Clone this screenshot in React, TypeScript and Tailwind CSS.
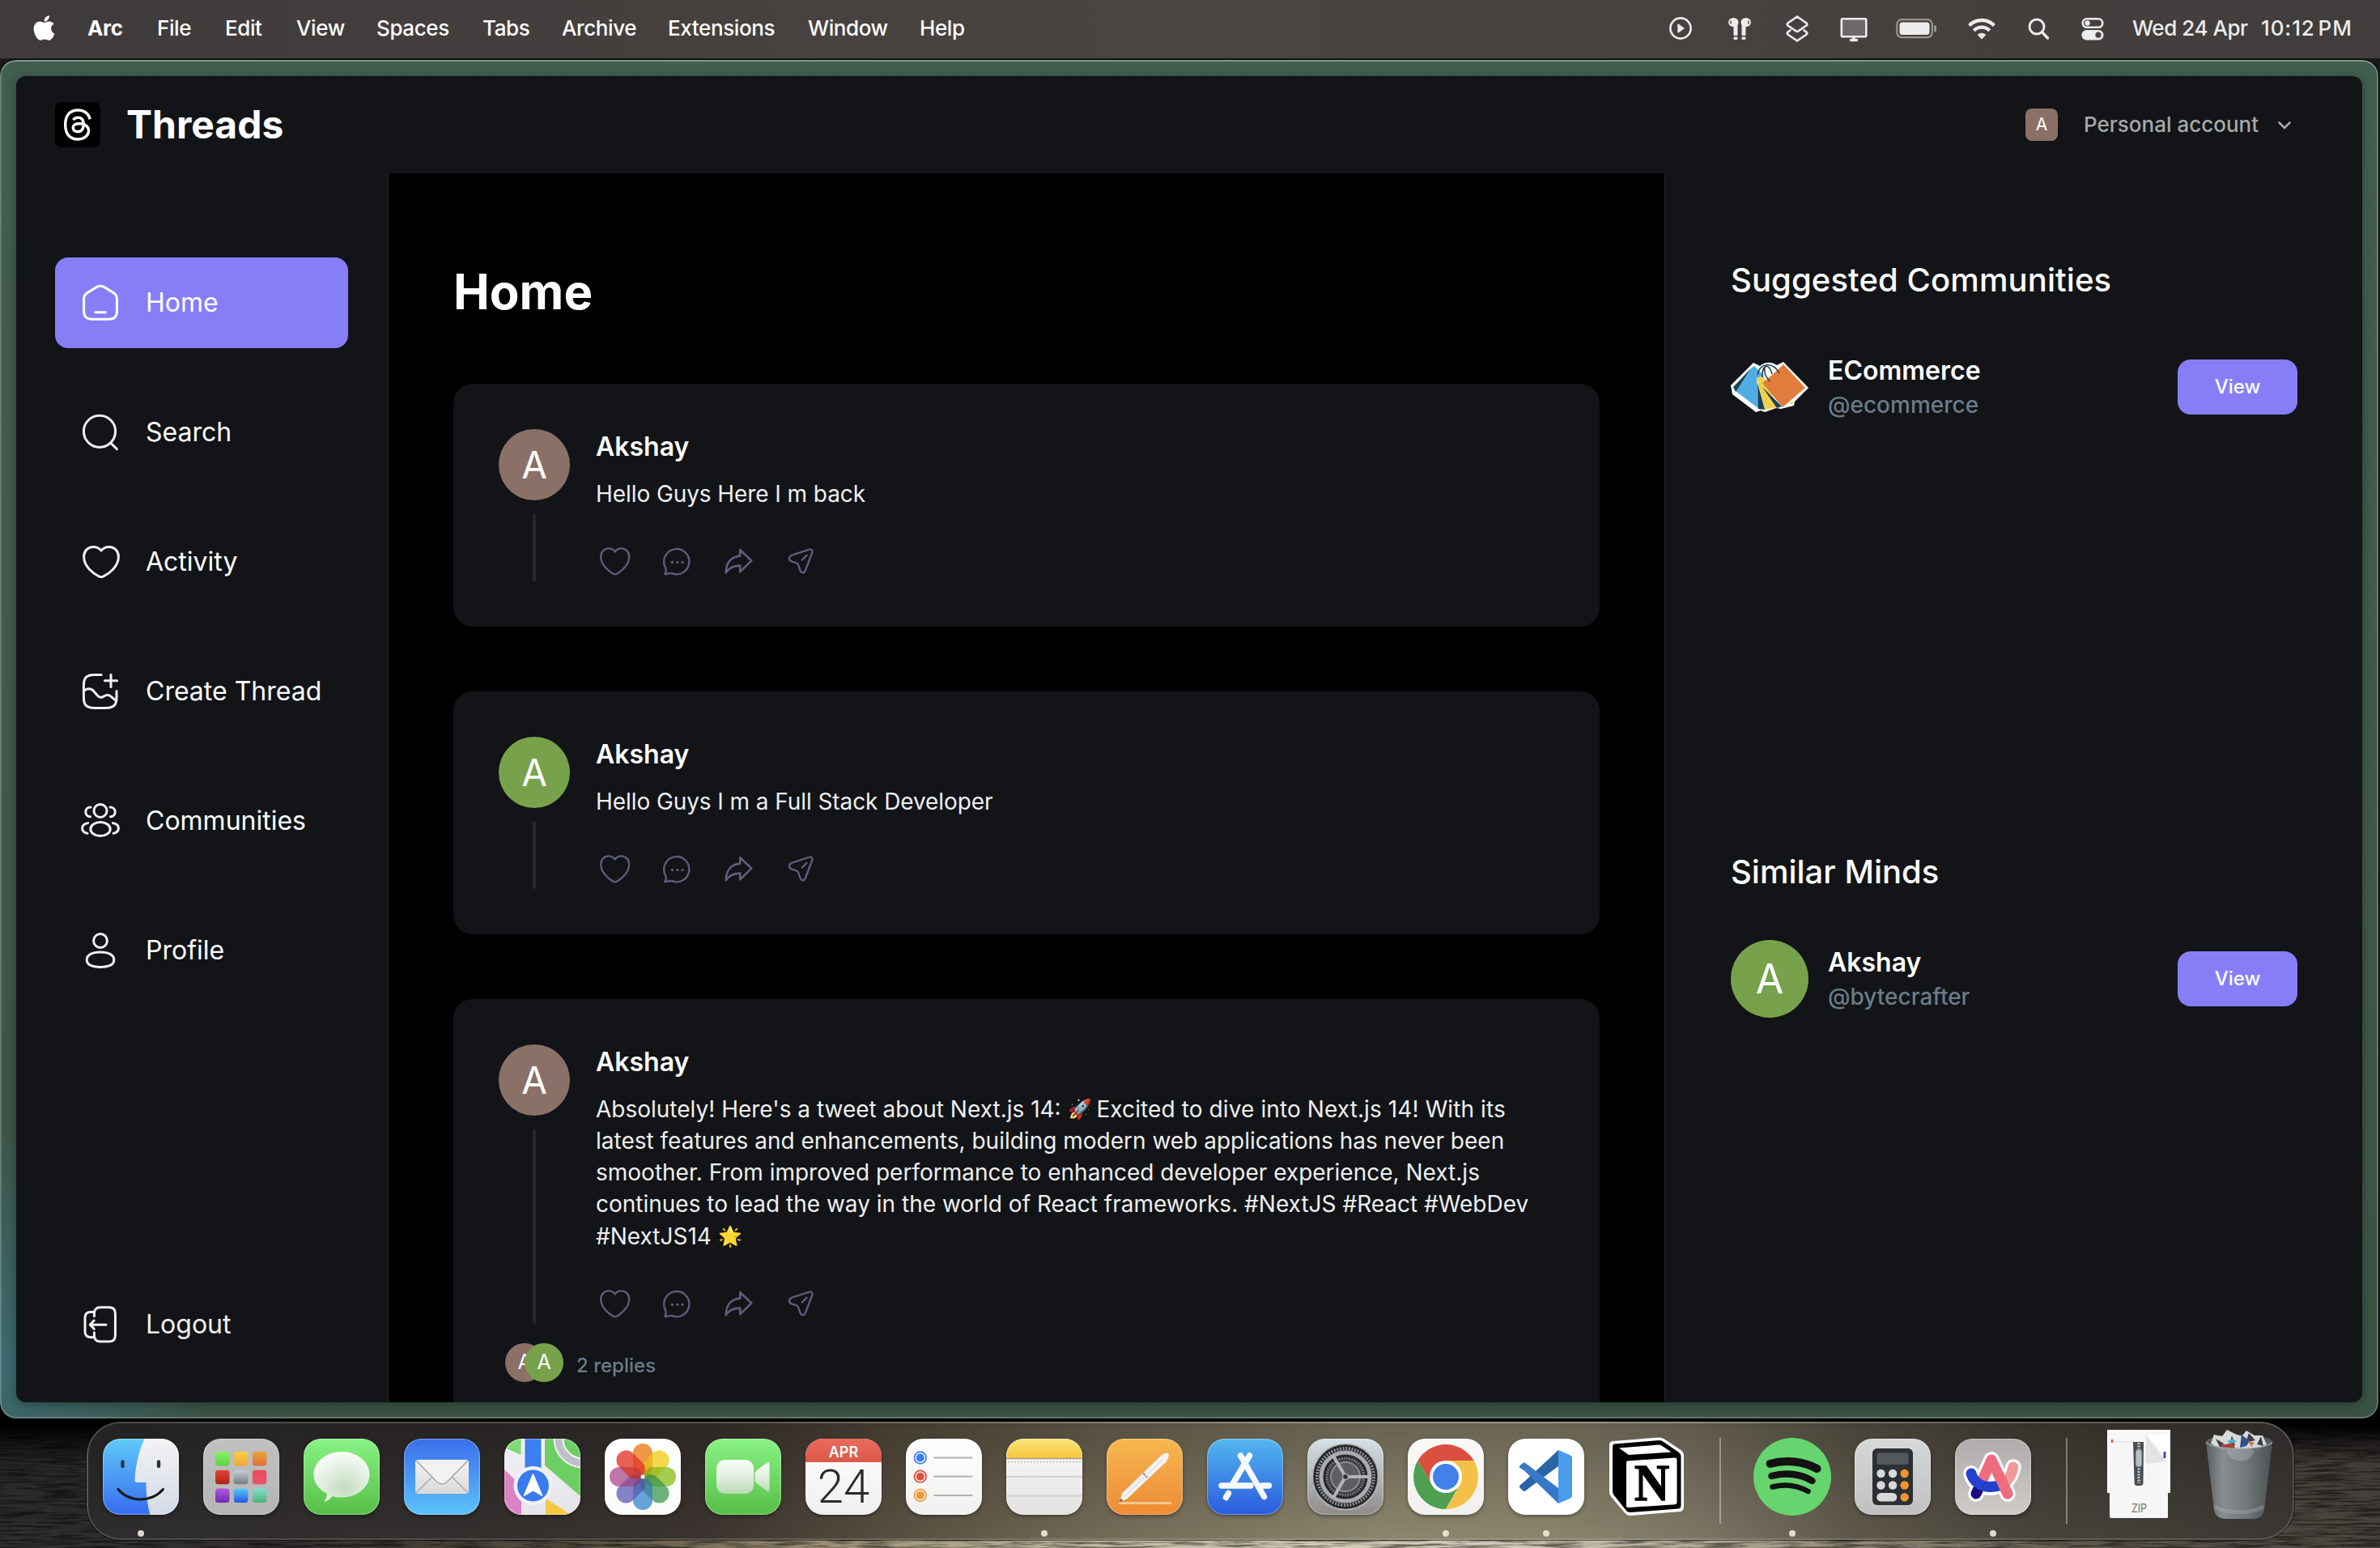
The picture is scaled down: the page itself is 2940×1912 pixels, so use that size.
import React from "react";
import { FaApple, FaThreads } from "react-icons/fa6";

type IconProps = { className?: string };

/* ---------- Navigation icons (24-unit grid) ---------- */

function NavSvg({ children }: { children: React.ReactNode }) {
  return (
    <svg
      viewBox="0 0 24 24"
      className="size-12 shrink-0 overflow-visible"
      fill="none"
      stroke="#efefef"
      strokeWidth={1.5}
      strokeLinecap="round"
      strokeLinejoin="round"
    >
      {children}
    </svg>
  );
}

const HomeIcon = () => (
  <NavSvg>
    <path d="M1.8 9.6c0-1.7.8-3 2.3-3.9l5.5-3.4c1.5-.9 3.3-.9 4.8 0l5.5 3.4c1.5.9 2.3 2.2 2.3 3.9v7.6c0 3.2-1.7 4.9-4.9 4.9H6.700c-3.200 0-4.900-1.700-4.900-4.900z" stroke="#fff" />
    <path d="M8.900 17.900h6.200" stroke="#fff" />
  </NavSvg>
);
const SearchIcon = () => (
  <NavSvg>
    <circle cx="11.5" cy="11.4" r="9.8" />
    <path d="M18.700 18.900l3.500 3.400" />
  </NavSvg>
);
const HeartIcon = () => (
  <NavSvg>
    <path d="M12.500 5C11.300 3.500 9.600 2.700 7.600 2.700 4.300 2.700 1.800 5.300 1.800 8.800c0 6.100 5.700 10.400 9.300 12.100.9.45 1.900.45 2.800 0 3.600-1.700 9.300-6 9.300-12.100 0-3.500-2.500-6.100-5.800-6.100-2 0-3.700.8-4.900 2.300z" />
  </NavSvg>
);
const CreateIcon = () => (
  <NavSvg>
    <path d="M12.600 1.700H8.200c-4.700 0-6.500 1.800-6.500 6.500v7.500c0 4.700 1.800 6.500 6.500 6.500h7.300c4.700 0 6.500-1.800 6.500-6.500v-3.900" />
    <path d="M18.500 1.600v7.600M14.700 5.400h7.600" />
    <path d="M1.800 11.700c1.800-1.700 4.300-1.800 6 .1l2.500 2.800c1.200 1.300 2.500 1.400 3.900.4 1.500-1 3-1 4.400.2l3 2.500" />
  </NavSvg>
);
const CommunitiesIcon = () => (
  <NavSvg>
    <circle cx="12" cy="5.700" r="4" />
    <ellipse cx="12" cy="17" rx="6.100" ry="4.300" />
    <path d="M6 3.500C4.200 3.500 2.900 4.700 2.900 6.400c0 1.600 1.200 2.900 2.900 3M18 3.500c1.800 0 3.100 1.200 3.100 2.900 0 1.600-1.200 2.900-2.900 3" />
    <path d="M4.300 13.300C2.200 13.700.8 14.900.8 16.500s1.200 2.700 3.200 3.200M19.700 13.300c2.100.4 3.500 1.600 3.500 3.200s-1.200 2.700-3.200 3.200" />
  </NavSvg>
);
const ProfileIcon = () => (
  <NavSvg>
    <circle cx="12" cy="6" r="4.200" />
    <path d="M3.600 17.800c0-3.200 3.600-4.800 8.400-4.800s8.400 1.600 8.400 4.800c0 3.400-3.600 4.400-8.400 4.400s-8.400-1-8.400-4.400z" />
  </NavSvg>
);
const LogoutIcon = () => (
  <NavSvg>
    <path d="M8.200 6.900V5.200c0-2.500 1.300-3.800 3.800-3.800h5.400c2.500 0 3.800 1.300 3.800 3.800v13.500c0 2.500-1.300 3.800-3.800 3.800H12c-2.500 0-3.800-1.300-3.800-3.800v-1.800" />
    <path d="M7.900 4.200H6.100c-2.300 0-3.600 1.300-3.600 3.600v8.500c0 2.300 1.300 3.600 3.600 3.600h1.800M15.500 12.100H5.700M8.100 9.500l-2.500 2.600 2.500 2.600" />
  </NavSvg>
);

/* ---------- Thread action icons ---------- */

function ActionSvg({ children }: { children: React.ReactNode }) {
  return (
    <svg viewBox="0 0 24 24" className="size-12" fill="none" stroke="#5C5C7B" strokeWidth={1.2} strokeLinecap="round" strokeLinejoin="round">
      {children}
    </svg>
  );
}

function Actions() {
  return (
    <div className="mt-10 flex gap-7">
      <ActionSvg>
        <path d="M11.800 5.700C10.900 4.400 9.500 3.700 7.900 3.700 5.100 3.700 3.100 5.900 3.100 8.900c0 4.800 4.600 8.800 7.500 10.400.8.5 1.700.5 2.500 0 2.900-1.600 7.500-5.600 7.500-10.400 0-3-2-5.200-4.800-5.200-1.600 0-3.100.7-4 2z" />
      </ActionSvg>
      <ActionSvg>
        <path d="M5 15.500A7.800 7.800 0 1 1 9 19.100C7.700 18.700 6.700 19.600 4.700 19.500c.8-1 .8-2.400.3-4z" />
        <path d="M9.200 12.200h.05M12.400 12.200h.05M15.500 12.200h.05" strokeWidth={1.600} />
      </ActionSvg>
      <ActionSvg>
        <path d="M13.100 4.600l7 6.700-7 6.900v-3.900c-4.200 0-6.800 1.300-8.700 4.400 0-5.600 2.600-9.800 8.700-10.400z" strokeWidth={1.350} />
      </ActionSvg>
      <ActionSvg>
        <path d="M18 4.300 7.200 7.800c-2.300.8-2.300 3.300 0 4l2.400.8c.8.200 1.300.8 1.600 1.600l1 2.900c.7 2.100 2.700 2.100 3.300 0L19.700 6.100c.3-1.200-.5-2.200-1.700-1.800z" />
        <path d="M13.400 10.800l2.900-2.900" />
      </ActionSvg>
    </div>
  );
}

/* ---------- Menu bar ---------- */

const menus: [string, string][] = [
  ["File", "w-[84px]"],
  ["Edit", "w-[88px]"],
  ["View", "w-[99px]"],
  ["Spaces", "w-[131px]"],
  ["Tabs", "w-[98px]"],
  ["Archive", "w-[131px]"],
  ["Extensions", "w-[173px]"],
  ["Window", "w-[138px]"],
  ["Help", "w-[80px]"],
];

function Slot({ w, children }: { w: string; children: React.ReactNode }) {
  return (
    <div className={w + " flex justify-center"}>
      <svg viewBox="0 0 56 40" className="h-10 w-14" fill="none" stroke="#ececec" strokeWidth={3} strokeLinecap="round" strokeLinejoin="round">
        {children}
      </svg>
    </div>
  );
}

function MenuBar() {
  return (
    <div className="flex h-[72px] items-center bg-linear-to-r from-[#3f3a3b] via-[#4a4540] to-[#403d3c] pb-[3px] pl-[37px] text-[26px] font-medium text-white">
      <FaApple className="mr-9 size-[35px]" />
      <div className="w-[86px] font-bold tracking-[-0.3px]">Arc</div>
      {menus.map(([m, w]) => (
        <div key={m} className={w + " tracking-[-0.4px]"}>
          {m}
        </div>
      ))}
      <div className="ml-auto flex items-center pr-[31px] text-[#ececec]">
        <Slot w="w-[72px]">
          <circle cx="28" cy="20" r="12.600" strokeWidth={2.600} />
          <path d="M25 15.200v9.600l7-4.800z" fill="#ececec" strokeWidth={1.500} />
        </Slot>
        <Slot w="w-[73px]">
          <g fill="#ececec" stroke="none">
            <ellipse cx="20.300" cy="12.500" rx="6.200" ry="5.600" />
            <ellipse cx="35.700" cy="12.500" rx="6.200" ry="5.600" />
            <rect x="20.500" y="12" width="5" height="17" rx="1" />
            <rect x="30.500" y="12" width="5" height="17" rx="1" />
            <rect x="20.500" y="30.500" width="5" height="3.500" rx="1.200" />
            <rect x="30.500" y="30.500" width="5" height="3.500" rx="1.200" />
          </g>
          <path d="M17 11v3M39 11v3" stroke="#5a5552" strokeWidth={1.600} />
        </Slot>
        <Slot w="w-[70px]">
          <path d="M28 5.500 39.500 13.500Q41 15 39.500 16.500L29.500 23.300Q28 24.300 26.500 23.300L16.500 16.500Q15 15 16.500 13.500z" strokeWidth={2.700} />
          <path d="M19.500 22.500 16.500 24.600Q15 26 16.500 27.500L28 35.500 39.500 27.500Q41 26 39.500 24.600L36.500 22.500" strokeWidth={2.700} />
        </Slot>
        <Slot w="w-[69px]">
          <rect x="12.800" y="8.300" width="30.500" height="22" rx="1.500" fill="#6d6966" strokeWidth={2.600} />
          <path d="M28 31v3M24.500 34.500h7" strokeWidth={3.400} />
        </Slot>
        <Slot w="w-[87px]">
          <rect x="3.300" y="9.200" width="43.500" height="22" rx="6" stroke="#98948f" strokeWidth={2.200} />
          <rect x="6.500" y="12.500" width="37" height="15.500" rx="3.500" fill="#ececec" stroke="none" />
          <path d="M50.500 17.500v5.500" stroke="#98948f" strokeWidth={3} />
        </Slot>
        <Slot w="w-[74px]">
          <g strokeWidth={4.300} strokeLinecap="butt">
            <path d="M12.600 16.500a21.500 21.500 0 0 1 30.800 0" />
            <path d="M18.300 22.700a13.500 13.500 0 0 1 19.400 0" />
          </g>
          <path d="M28 33.500l-5.300-5.600a7.500 7.500 0 0 1 10.600 0z" fill="#ececec" stroke="none" />
        </Slot>
        <Slot w="w-[65px]">
          <circle cx="26" cy="18" r="9" strokeWidth={2.900} />
          <path d="M32.800 25l6.700 7" strokeWidth={3.300} />
        </Slot>
        <Slot w="w-[69px]">
          <rect x="15.700" y="8.300" width="24.600" height="10.500" rx="5.200" strokeWidth={2.600} />
          <circle cx="21.500" cy="13.500" r="3.200" fill="#ececec" stroke="none" />
          <rect x="14.500" y="22" width="27" height="12.500" rx="6.200" fill="#ececec" stroke="none" />
          <circle cx="35" cy="28.200" r="3.600" fill="#4a4643" stroke="none" />
        </Slot>
        <div className="ml-[15px] w-[159px] tracking-[-0.45px]">Wed 24 Apr</div>
        <div className="w-[116px] tracking-[0.9px] whitespace-nowrap [word-spacing:-4px]">10:12 PM</div>
      </div>
    </div>
  );
}

/* ---------- App header ---------- */

function TopBar() {
  return (
    <header className="flex h-[120px] shrink-0 items-center justify-between pr-20 pl-12">
      <div className="flex items-center gap-8">
        <div className="flex size-14 items-center justify-center rounded-lg bg-black text-white">
          <FaThreads className="size-[42px]" />
        </div>
        <p className="-mt-[2px] text-[48px] leading-[67px] font-bold text-white">Threads</p>
      </div>
      <div className="flex w-[336px] items-center">
        <div className="flex size-10 items-center justify-center rounded-lg bg-[#8a7067] text-[21px] text-white">A</div>
        <span className="-mt-[2px] ml-8 text-[26px] font-medium whitespace-nowrap text-[#a7a8a9]">Personal account</span>
        <svg viewBox="0 0 16 10" className="ml-6 mt-0.5 h-[10px] w-4" fill="none" stroke="#a7a8a9" strokeWidth={2.600} strokeLinecap="round" strokeLinejoin="round">
          <path d="M1.500 1.500 8 8l6.500-6.500" />
        </svg>
      </div>
    </header>
  );
}

/* ---------- Sidebars ---------- */

const links: [string, () => React.JSX.Element][] = [
  ["Home", HomeIcon],
  ["Search", SearchIcon],
  ["Activity", HeartIcon],
  ["Create Thread", CreateIcon],
  ["Communities", CommunitiesIcon],
  ["Profile", ProfileIcon],
];

function LeftSidebar() {
  return (
    <nav className="flex w-[460px] shrink-0 flex-col border-r-2 border-[#1f1f22] px-12 pt-[104px] pb-[72px] text-[32px] text-white">
      <div className="flex flex-col gap-12">
        {links.map(([label, Icon], i) => (
          <a key={label} className={"flex h-28 items-center gap-8 rounded-2xl px-8 whitespace-nowrap " + (i === 0 ? "bg-[#877ef7]" : "")}>
            <Icon />
            {label}
          </a>
        ))}
      </div>
      <a className="mt-auto flex h-12 items-center gap-8 px-8 text-[#efefef]">
        <LogoutIcon />
        Logout
      </a>
    </nav>
  );
}

function BagsLogo({ className }: IconProps) {
  return (
    <svg viewBox="0 0 96 96" className={className}>
      <path d="M0 46 28 18 36 22Q46 14 57 21L65 17 96 49 79 66 78 71 62 75 56 74 42 79 37 77 31 79 2 57z" fill="#fff" />
      <path d="M29 22 41 34 32 37 35 75 6 53 25 25z" fill="#50ade3" />
      <path d="M3 48 25 25 6 54z" fill="#1c4152" />
      <path d="M32 37 40 34 58 73 42 76z" fill="#f1d04e" />
      <path d="M33 43 42 76 34 75zM39 48 63 72 57 74z" fill="#1c4152" />
      <path d="M65 20 92 49 64 73 39 43 50 34z" fill="#e27c3c" />
      <path d="M72 69l5-4-1 4z" fill="#f1d04e" />
      <g fill="none" stroke="#1c4152" strokeWidth="1.500">
        <path d="M33 33C36 18 52 16 60 31M39 36C38 22 47 16 51 32M42 24C41 34 45 36 48 41" />
      </g>
    </svg>
  );
}

function UserCard({ name, handle, children }: { name: string; handle: string; children: React.ReactNode }) {
  return (
    <article className="mt-14 flex items-center gap-6">
      {children}
      <div className="flex-1">
        <h4 className="text-[32px] leading-[44.8px] font-semibold text-white">{name}</h4>
        <p className="text-[28px] leading-[39.2px] font-medium text-[#697c89]">{handle}</p>
      </div>
      <button className="h-[68px] w-[148px] rounded-2xl bg-[#877ef7] text-[24px] font-medium text-white">View</button>
    </article>
  );
}

function RightSidebar() {
  return (
    <aside className="flex w-[862px] shrink-0 flex-col border-l-2 border-[#1f1f22] px-20 pt-[104px]">
      <section className="h-[731px]">
        <h3 className="text-[40px] leading-[56px] font-medium tracking-[0.1px] text-white">Suggested Communities</h3>
        <UserCard name="ECommerce" handle="@ecommerce">
          <BagsLogo className="size-24" />
        </UserCard>
      </section>
      <section>
        <h3 className="text-[40px] leading-[56px] font-medium text-white">Similar Minds</h3>
        <UserCard name="Akshay" handle="@bytecrafter">
          <div className="flex size-24 items-center justify-center rounded-full bg-[#77a24b] text-[50px] text-white">A</div>
        </UserCard>
      </section>
    </aside>
  );
}

/* ---------- Feed ---------- */

function ThreadCard({ color, children, footer }: { color: string; children: React.ReactNode; footer?: React.ReactNode }) {
  return (
    <article className="rounded-3xl bg-[#121417] p-14">
      <div className="flex gap-8">
        <div className="flex flex-col items-center">
          <div className={"flex size-[88px] items-center justify-center rounded-full text-[46px] text-white " + color}>A</div>
          <div className="mt-4 w-1 grow rounded-full bg-[#272727]" />
        </div>
        <div className="flex-1">
          <h4 className="text-[32px] leading-[44.8px] font-semibold text-white">Akshay</h4>
          <p className="mt-4 text-[28px] leading-[39.2px] text-[#efefef]">{children}</p>
          <Actions />
        </div>
      </div>
      {footer}
    </article>
  );
}

function Feed() {
  return (
    <main className="flex w-[1576px] shrink-0 flex-col overflow-hidden bg-black px-20 pt-[104px]">
      <h1 className="text-[60px] leading-[84px] font-bold text-white">Home</h1>
      <div className="mt-[72px] flex flex-col gap-20">
        <ThreadCard color="bg-[#8a7067]">
          <span className="tracking-[-0.08px]">Hello Guys Here I m back</span>
        </ThreadCard>
        <ThreadCard color="bg-[#77a24b]">
          <span className="tracking-[-0.08px]">Hello Guys I m a Full Stack Developer</span>
        </ThreadCard>
        <ThreadCard
          color="bg-[#8a7067]"
          footer={
            <div className="ml-2 mt-6 flex items-center text-[25px] text-white">
              <div className="flex size-12 items-center justify-center rounded-full bg-[#8a7067]">A</div>
              <div className="relative -ml-6 flex size-12 items-center justify-center rounded-full bg-[#77a24b]">A</div>
              <p className="mt-2 ml-4 text-[24px] leading-8 font-medium text-[#697c89]">2 replies</p>
            </div>
          }
        >
          Absolutely! Here's a tweet about Next.js 14: <span className="inline-block w-[28px] align-[2px] text-[24px] leading-none">🚀</span>{" "}
          <span className="tracking-[0.1px]">Excited to dive into Next.js 14! With its</span> latest features and enhancements, building modern web applications has never been smoother. From improved performance to enhanced
          developer experience, Next.js continues to lead the way in the world of React frameworks. #NextJS #React #WebDev #NextJS14{" "}
          <span className="inline-block w-[28px] align-[2px] text-[24px] leading-none">🌟</span>
        </ThreadCard>
      </div>
    </main>
  );
}

/* ---------- Dock icons (94-unit tiles) ---------- */

function Tile({ id, from, to, children, edge = true }: { id: string; from: string; to: string; children?: React.ReactNode; edge?: boolean }) {
  return (
    <svg viewBox="0 0 94 94" className="size-[94px] overflow-visible drop-shadow-[0_2px_2px_rgba(0,0,0,0.35)]">
      <defs>
        <linearGradient id={id + "-bg"} x1="0" y1="0" x2="0" y2="1">
          <stop offset="0" stopColor={from} />
          <stop offset="1" stopColor={to} />
        </linearGradient>
        <clipPath id={id + "-clip"}>
          <rect width="94" height="94" rx="21.500" />
        </clipPath>
      </defs>
      <g clipPath={`url(#${id}-clip)`}>
        <rect width="94" height="94" fill={`url(#${id}-bg)`} />
        {children}
      </g>
      {edge && <rect x=".6" y=".6" width="92.800" height="92.800" rx="21" fill="none" stroke="#fff" strokeOpacity=".28" strokeWidth="1.200" />}
    </svg>
  );
}

const Finder = () => (
  <Tile id="finder" from="#5fcbf9" to="#366bf0">
    <defs>
      <linearGradient id="finder-face" x1="0" y1="0" x2="0" y2="1">
        <stop offset="0" stopColor="#f4f3f4" />
        <stop offset="1" stopColor="#d2dae6" />
      </linearGradient>
    </defs>
    <path d="M51.500 0C44 17 40.500 33 39.500 51Q39.500 54 42 54H53.500C53.500 68 55 82 58.500 94H94V0z" fill="url(#finder-face)" />
    <path d="M24.500 28.500v5.500M69 28.500v5.500" stroke="#2c3440" strokeWidth="4.400" strokeLinecap="round" />
    <path d="M19 62.500C33 79 60 79 74.500 62.500" fill="none" stroke="#17191e" strokeWidth="3" strokeLinecap="round" />
  </Tile>
);

const padColors: [string, string][] = [
  ["#8af06a", "#5fd33f"],
  ["#f8cf48", "#f0a838"],
  ["#eda23a", "#dd7136"],
  ["#e24535", "#ad2318"],
  ["#c6d3d9", "#77797b"],
  ["#ea4a5f", "#e8566a"],
  ["#b259e0", "#6e2ba8"],
  ["#5ac8fa", "#2a55e2"],
  ["#80dfd0", "#4fb377"],
];

const Launchpad = () => (
  <Tile id="pad" from="#c0c0c0" to="#b5b5b5">
    {padColors.map(([a, b], i) => (
      <g key={i}>
        <linearGradient id={"pad-" + i} x1="0" y1="0" x2="0" y2="1">
          <stop offset="0" stopColor={a} />
          <stop offset="1" stopColor={b} />
        </linearGradient>
        <rect x={15 + (i % 3) * 22.900} y={16 + Math.floor(i / 3) * 22.800} width="17.500" height="17.500" rx="3.500" fill={`url(#pad-${i})`} />
      </g>
    ))}
  </Tile>
);

const Messages = () => (
  <Tile id="msg" from="#88f284" to="#57bf47">
    <defs>
      <radialGradient id="msg-b" cx=".55" cy=".72" r=".75">
        <stop offset="0" stopColor="#c4dcc0" />
        <stop offset="1" stopColor="#fdfffd" />
      </radialGradient>
    </defs>
    <path d="M47 16c19 0 34.500 12.600 34.500 28.300S66 72.600 47 72.600c-4.500 0-8-.6-11.500-1.600-2.500 3.500-6 6-10.500 7 2.500-2.700 4-6.300 3.800-10.500C18 62.500 12.500 54 12.500 44.300 12.500 28.600 28 16 47 16z" fill="url(#msg-b)" />
  </Tile>
);

const Mail = () => (
  <Tile id="mail" from="#3a6eeb" to="#5cc3fa">
    <defs>
      <linearGradient id="mail-e" x1="0" y1="0" x2="0" y2="1">
        <stop offset="0" stopColor="#f3f3f3" />
        <stop offset="1" stopColor="#d9d9da" />
      </linearGradient>
    </defs>
    <rect x="14" y="26" width="66" height="42" rx="3.500" fill="url(#mail-e)" />
    <path d="M15 67 34.500 47.500M79 67 59.500 47.500" stroke="#a8a8a8" strokeWidth="1.300" />
    <path d="M15.500 27.500 41 53.500Q47 58.500 53 53.500L78.500 27.500" fill="#f2f2f2" stroke="#a2a2a2" strokeWidth="1.500" />
  </Tile>
);

const Maps = () => (
  <Tile id="maps" from="#f2f2f5" to="#e4e4e9">
    <path d="M0 0H20.500V20L0 11z" fill="#7fdc70" />
    <path d="M50 0H94V71L50 33z" fill="#6dce63" />
    <path d="M0 38 21 58V94H0z" fill="#dc83c6" />
    <path d="M51 74 83 94H51z" fill="#f3c945" />
    <circle cx="97" cy="0" r="30" fill="none" stroke="#f4f4f6" strokeWidth="13" />
    <circle cx="97" cy="0" r="30" fill="none" stroke="#bfc1c9" strokeWidth="9" />
    <path d="M25.500 0h20v50h-20z" fill="#3c7ff0" />
    <circle cx="35.500" cy="58" r="24" fill="#f1f1f3" />
    <circle cx="35.500" cy="58" r="19.500" fill="#3a7bf0" />
    <path d="M35.500 44 46.500 70 35.500 63.500 24.500 70z" fill="#fff" stroke="#fff" strokeWidth="1.500" strokeLinejoin="round" />
  </Tile>
);

const petals = ["#f19a38", "#f4dc3e", "#a9cf46", "#68b679", "#5fa6dc", "#8583c9", "#c473ae", "#ec5b4b"];

const Photos = () => (
  <Tile id="photos" from="#ffffff" to="#fafafa">
    {petals.map((c, i) => (
      <rect key={c} x="35" y="6" width="24" height="40" rx="12" fill={c} fillOpacity=".82" transform={`rotate(${i * 45} 47 47)`} />
    ))}
    {petals.map((c, i) => (
      <rect key={c} x="35" y="6" width="24" height="40" rx="12" fill={c} fillOpacity=".3" transform={`rotate(${i * 45} 47 47)`} className="mix-blend-multiply" />
    ))}
    <circle cx="47" cy="47" r="2.500" fill="#fff" />
  </Tile>
);

const FaceTime = () => (
  <Tile id="ft" from="#88f284" to="#57bf47">
    <defs>
      <linearGradient id="ft-b" x1="0" y1="0" x2="0" y2="1">
        <stop offset="0" stopColor="#fbfffb" />
        <stop offset=".5" stopColor="#e2efe0" />
        <stop offset="1" stopColor="#b9dbb4" />
      </linearGradient>
    </defs>
    <rect x="14" y="26" width="46" height="42" rx="10.500" fill="url(#ft-b)" />
    <path d="M61.500 42.500Q61.500 41 63 39.800L76.500 29.500Q79.500 28 79.500 31V63.500Q79.500 66.500 76.500 65L63 54.500Q61.500 53.500 61.500 52z" fill="url(#ft-b)" />
  </Tile>
);

function Calendar() {
  return (
    <div className="flex size-[94px] flex-col items-center overflow-hidden rounded-[21.5px] bg-linear-to-b from-white to-[#efefee] shadow-[0_2px_3px_rgba(0,0,0,0.35)]">
      <div className="flex h-[29px] w-full items-center justify-center bg-linear-to-b from-[#ea6a5e] to-[#dc5849] pt-[3px] text-[18px] font-semibold text-white">APR</div>
      <div className="mt-[-1px] font-['Roboto'] text-[58px] leading-[62px] font-light text-[#2b2b2b]">24</div>
    </div>
  );
}

const Reminders = () => (
  <Tile id="rem" from="#ffffff" to="#f1f0ef">
    {["#3b7df5", "#e0503f", "#ec9a36"].map((c, i) => (
      <g key={c}>
        <circle cx="17.800" cy={23.500 + i * 23.200} r="7.300" fill="none" stroke={c} strokeWidth="1.700" />
        <circle cx="17.800" cy={23.500 + i * 23.200} r="5" fill={c} />
        <path d={`M34.500 ${23.500 + i * 23.200}h48`} stroke="#b1b1b6" strokeWidth="2" />
      </g>
    ))}
  </Tile>
);

const Notes = () => (
  <Tile id="notes" from="#fbfbfa" to="#e4e2df">
    <defs>
      <linearGradient id="notes-y" x1="0" y1="0" x2="0" y2="1">
        <stop offset="0" stopColor="#fbe37a" />
        <stop offset="1" stopColor="#f7c83c" />
      </linearGradient>
    </defs>
    <rect width="94" height="24" fill="url(#notes-y)" />
    <path d="M0 24.500h94" stroke="#a59b83" strokeWidth="1.500" />
    <path d="M2 28.500h92" stroke="#b4b2b0" strokeWidth="1.600" strokeDasharray="1.800 2.200" />
    <path d="M0 47h94M0 70.500h94" stroke="#d2d1d4" strokeWidth="1.800" />
  </Tile>
);

const Pages = () => (
  <Tile id="pages" from="#f6b74f" to="#ed8b36">
    <path d="M16 79.500h63" stroke="#f8d19c" strokeWidth="2.600" strokeLinecap="round" />
    <path d="M15.500 79 19 67.500 66 22C70 18 74 16.800 76 18.200 78 20 76 25 73 29L25.500 74z" fill="#f5f3f4" />
    <path d="M45 42.500l5.500 5.500" stroke="#9a9499" strokeWidth="2" />
    <path d="M15.500 79l2-5.500 3 3z" fill="#8b6a4d" />
    <path d="M22 72 70 25" stroke="#e3dfe2" strokeWidth="1.500" />
  </Tile>
);

const AppStore = () => (
  <Tile id="as" from="#52b7ee" to="#2b5ade">
    <g stroke="#f6f8fc" strokeWidth="7.400" strokeLinecap="round" fill="none">
      <path d="M41.500 21 70.500 71.500" />
      <path d="M52.500 21 32 55.500" />
      <path d="M26.500 67.500 23.500 72.500" />
      <path d="M18 58H54M68 58h8.500" />
    </g>
  </Tile>
);

const Settings = () => (
  <Tile id="set" from="#d6e1e8" to="#8f8b89">
    <circle cx="47" cy="47" r="41" fill="#26282a" />
    <circle cx="47" cy="47" r="40.500" fill="none" stroke="#b9bdc0" strokeWidth="1.500" />
    <circle cx="47" cy="47" r="35" fill="none" stroke="#8f9295" strokeWidth="4" strokeDasharray="1.900 1.766" />
    <circle cx="47" cy="47" r="30" fill="none" stroke="#a9acaf" strokeWidth="5" />
    <circle cx="47" cy="47" r="23" fill="#3d3f41" stroke="#77797c" strokeWidth="3" strokeDasharray="1.800 1.400" />
    <circle cx="47" cy="47" r="18" fill="#5c5e61" stroke="#8b8d90" strokeWidth="2" />
    <g stroke="#b1b4b7" strokeWidth="4">
      <path d="M47 47h30M47 47 32 21M47 47 32 73" />
    </g>
    <circle cx="47" cy="47" r="3.500" fill="#2c2e30" stroke="#a9acaf" strokeWidth="1.500" />
  </Tile>
);

const Chrome = () => (
  <Tile id="chrome" from="#f9f9f8" to="#f1f0ee">
    <g transform="translate(47 47)">
      <path d="M0 0 -34.600 -20A40 40 0 0 1 34.600 -20z" fill="#db4f3e" />
      <path d="M-34.600 -20A40 40 0 0 0 0 40L17 10 -17 10z" fill="#4f9f52" />
      <path d="M34.600 -20A40 40 0 0 1 0 40L17.300 10 0 -20z" fill="#f3c147" />
      <path d="M-34.600 -20-17 10 0 -20z" fill="#db4f3e" />
      <circle r="20" fill="#fff" />
      <circle r="16" fill="#4380ea" />
    </g>
  </Tile>
);

const VSCode = () => (
  <Tile id="vs" from="#ffffff" to="#ffffff">
    <path d="M62 14 20 53 14.500 57.500Q13 59 14.500 60.500L18.500 64.500Q20 65.300 21.500 64.300L62 34z" fill="#2b65a8" />
    <path d="M62 80 20 39.500 14.500 36Q13 34.500 14.500 33L18.500 30Q20 29 21.500 30.200L62 61z" fill="#3579c8" />
    <path d="M62 14 77 20.500Q79 21.500 79 23.500V70.500Q79 72.500 77 73.500L62 80z" fill="#4a9cea" />
  </Tile>
);

const Notion = () => (
  <svg viewBox="0 0 94 98" className="h-[98px] w-[94px] overflow-visible">
    <path d="M5 5 62 0.500Q66 0.500 69 2.500L90 16.500Q93 19 93 22V86Q93 91.500 88 92L28 97Q23 97.200 20 93.500L3.500 74Q1 71 1 67V9.500Q1 5.500 5 5z" fill="#fff" />
    <path d="M7 8.500 62 4Q65 4 67 5.300L87 19Q89.500 21 89.500 23.500V84Q89.500 88 86 88.500L27 93Q24 93 22 91L6.500 71.500Q5 69.500 5 66.500V12Q5 9 7 8.500z" fill="#000" />
    <path d="M13 13.500 62 9.500Q64 9.500 65.500 10.500L77.500 18.500 25 22z" fill="#fff" />
    <path d="M23 29.500 82 25.500Q84.500 25.500 84.500 28V80.500Q84.500 83 82 83.200L24.500 87Q22 87 22 84.500V32Q22 29.700 23 29.500z" fill="#fff" />
    <text x="53.500" y="78" textAnchor="middle" fontFamily="Liberation Serif, serif" fontWeight="700" fontSize="64" textLength="43" lengthAdjust="spacingAndGlyphs" fill="#000" stroke="#000" strokeWidth="1.500">
      N
    </text>
  </svg>
);

const Spotify = () => (
  <svg viewBox="0 0 96 96" className="size-24">
    <circle cx="48" cy="48" r="48" fill="#67d56f" />
    <g fill="none" stroke="#121212" strokeLinecap="round">
      <path d="M20.500 32C40 26.500 62 29 78.500 38" strokeWidth="10" />
      <path d="M22.500 47C40 42 59 44.500 72.500 53" strokeWidth="8.500" />
      <path d="M23.500 60.500C39 56.500 55 59 67.500 66" strokeWidth="6.500" />
    </g>
  </svg>
);

const Calculator = () => (
  <Tile id="calc" from="#d6d8d8" to="#c0c0bf">
    <rect x="22" y="12" width="50" height="70" rx="6" fill="#2d3033" />
    <rect x="27.500" y="17.500" width="39" height="14.500" rx="2.500" fill="#54575b" />
    {[0, 1].map((r) =>
      [0, 1, 2].map((c) => <circle key={r * 3 + c} cx={32.500 + c * 14.600} cy={43 + r * 14.500} r="5.200" fill={c === 2 ? "#ee9430" : "#d9d9da"} />)
    )}
    <rect x="27.300" y="67" width="25" height="10.400" rx="5.200" fill="#d9d9da" />
    <circle cx="61.700" cy="72.200" r="5.200" fill="#ee9430" />
  </Tile>
);

const Arc = () => (
  <Tile id="arc" from="#aeacaa" to="#cfccc8">
    <g fill="none" strokeLinecap="round" strokeLinejoin="round">
      <g stroke="#fff" strokeWidth="19.500">
        <path d="M26 68 45 26 65 68" />
        <path d="M20 43C24 58 36 61 47 60 62 58 69 48 72 35" />
      </g>
      <path d="M26 68 34 51" stroke="#1b0a80" strokeWidth="13" />
      <path d="M72 35C70 45 65 53 57 57" stroke="#f19a97" strokeWidth="13" />
      <path d="M34 51 45 26 65 68" stroke="#ee6c7d" strokeWidth="13" />
      <path d="M20 43C23 53 31 59 43 59.500 49 59.500 53 58.500 56 57" stroke="#2440cf" strokeWidth="13" />
      <path d="M53 43 65 68" stroke="#ee6c7d" strokeWidth="13" />
    </g>
  </Tile>
);

const Zip = () => (
  <svg viewBox="0 0 78 110" className="h-[110px] w-[78px]">
    <rect width="78" height="78" fill="#fdfdfd" />
    <path d="M3 3H75V108Q75 109 74 109H5Q3 109 3 107z" fill="#f6f6f6" />
    <path d="M4 15h30" stroke="#dcdcdc" strokeWidth="1" />
    <path d="M6 12v4" stroke="#d8483d" strokeWidth="2" />
    <path d="M49 6H76V40z" fill="#ffffff" />
    <path d="M48 7 73 39 50 42Q47 42 47.500 39z" fill="#e3e3e4" />
    <path d="M71 27v8" stroke="#38559e" strokeWidth="3" />
    <path d="M32 15H45L44.500 66Q44 69 41 69H36.500Q34 69 33.700 66z" fill="#4a4d50" />
    <path d="M39 16V66" stroke="#c3c7ca" strokeWidth="3.500" strokeDasharray="2 1.500" />
    <rect x="35" y="24" width="8" height="22" rx="3.500" fill="#b7c0c6" stroke="#5e666b" strokeWidth="1" />
    <text x="39.500" y="102" textAnchor="middle" fontFamily="Inter, sans-serif" fontSize="14" textLength="19" lengthAdjust="spacingAndGlyphs" fill="#6f6f6f">
      ZIP
    </text>
  </svg>
);

const Trash = () => (
  <svg viewBox="0 0 86 112" className="h-[112px] w-[86px]">
    <defs>
      <linearGradient id="trash-b" x1="0" y1="0" x2="1" y2="0">
        <stop offset="0" stopColor="#5b6063" />
        <stop offset=".25" stopColor="#8d9295" />
        <stop offset=".6" stopColor="#767b7e" />
        <stop offset="1" stopColor="#4e5356" />
      </linearGradient>
    </defs>
    <ellipse cx="43" cy="16" rx="41" ry="9" fill="#575b5e" />
    <path d="M8 18 12 7 22 9 28 1 38 6 46 9 52 2 62 8 72 8 77 19 66 25 20 25z" fill="#d9d9d8" />
    <path d="M14 12 24 18 20 24zM34 8l4 12-8 4zM55 5l8 9-12 3zM70 9l3 12-8-2z" fill="#3c3f44" />
    <path d="M28 15l8-3 4 4-8 2z" fill="#41b6c9" />
    <path d="M20 20l16-3 2 7-14 1z" fill="#a8423b" />
    <path d="M46 7l10 8-4 6-8 2z" fill="#31508f" />
    <path d="M54 15l8 2-4 5z" fill="#c77c35" />
    <path d="M2 16C8 27 78 27 84 16L74 100Q72 111 60 111H27Q14 111 12 100z" fill="url(#trash-b)" fillOpacity=".95" />
    <path d="M2 16C8 27 78 27 84 16" fill="none" stroke="#a2a7a9" strokeWidth="1.300" />
    <path d="M28 30c8 12 26 14 34-2l-4-4-30 1z" fill="#c7cacb" fillOpacity=".3" />
    <path d="M13 95c10 10 50 10 60 0" fill="none" stroke="#b6babd" strokeOpacity=".3" strokeWidth="5" />
  </svg>
);

const dock: [string, React.ReactNode, boolean][] = [
  ["finder", <Finder />, true],
  ["launchpad", <Launchpad />, false],
  ["messages", <Messages />, false],
  ["mail", <Mail />, false],
  ["maps", <Maps />, false],
  ["photos", <Photos />, false],
  ["facetime", <FaceTime />, false],
  ["calendar", <Calendar />, false],
  ["reminders", <Reminders />, false],
  ["notes", <Notes />, true],
  ["pages", <Pages />, false],
  ["appstore", <AppStore />, false],
  ["settings", <Settings />, false],
  ["chrome", <Chrome />, true],
  ["vscode", <VSCode />, true],
  ["notion", <Notion />, false],
  ["sep1", null, false],
  ["spotify", <Spotify />, true],
  ["calculator", <Calculator />, false],
  ["arc", <Arc />, true],
  ["sep2", null, false],
  ["zip", <Zip />, false],
  ["trash", <Trash />, false],
];

function Dock() {
  return (
    <div className="relative mt-1 ml-[107px] flex h-[146px] w-[2727px] rounded-[42px] border-2 border-white/15 bg-[linear-gradient(to_right,#2e2d2d_0%,#332f2d_18%,#3b3430_28%,#564d3e_36%,#736a56_46%,#8a846c_58%,#8c856d_66%,#7d7665_73%,#5f594b_80%,#48443b_88%,#3b3835_100%)] pl-[3px] shadow-[0_0_0_1px_rgba(0,0,0,0.5)]">
      <div className="absolute inset-0 rounded-[40px] bg-linear-to-b from-black/25 to-transparent" />
      {dock.map(([name, icon, running]) =>
        icon ? (
          <div key={name} className="relative flex h-full w-[124px] items-center justify-center pb-[10px]">
            <div className={name === "zip" || name === "trash" ? "-mt-[6px]" : ""}>{icon}</div>
            {running && <div className="absolute bottom-[2px] size-2 rounded-full bg-[#f0e9dc]/90" />}
          </div>
        ) : (
          <div key={name} className="relative flex w-14 justify-center pt-[18px] pl-[1px]">
            <div className="h-[106px] w-[2px] bg-white/35" />
          </div>
        )
      )}
    </div>
  );
}

/* ---------- Desktop ---------- */

function Wallpaper() {
  return (
    <div className="absolute inset-x-0 bottom-0 h-[190px] overflow-hidden bg-[linear-gradient(to_right,#302e30_0%,#33302e_12%,#5a5142_25%,#a09478_35%,#cdc5ae_50%,#d6cfbb_62%,#a49a85_75%,#5d554a_88%,#4a453f_100%)]">
      <svg className="absolute inset-0 h-full w-full" preserveAspectRatio="none">
        <filter id="grain" x="0" y="0" width="100%" height="100%">
          <feTurbulence type="fractalNoise" baseFrequency="0.02 0.35" numOctaves="4" seed="4" />
          <feColorMatrix type="matrix" values="0 0 0 0 0  0 0 0 0 0  0 0 0 0 0  3 0 0 0 -1.200" />
        </filter>
        <rect width="100%" height="100%" filter="url(#grain)" opacity=".5" />
      </svg>
      <div className="absolute inset-0 bg-linear-to-b from-black from-20% via-black/15 via-45% to-transparent" />
    </div>
  );
}

export default function App() {
  return (
    <div className="relative h-[1912px] w-[2940px] overflow-hidden bg-[#1b1a1b] font-['Inter',sans-serif]">
      <Wallpaper />
      <div className="relative flex flex-col">
        <MenuBar />
        <div className="mt-[2px] h-[1678px] w-[2938px] rounded-[20px] bg-[radial-gradient(ellipse_260px_300px_at_0_96%,#3c6a70,transparent),linear-gradient(to_bottom,#425e50,#405849_60%,#3a5245)] p-5 shadow-[inset_0_0_0_2px_rgba(255,255,255,0.2),inset_0_2px_0_rgba(255,255,255,0.2),0_0_0_1px_#000]">
          <div className="flex h-[1638px] flex-col overflow-hidden rounded-[12px] bg-[#121417] shadow-[0_2px_12px_rgba(0,0,0,0.35)]">
            <TopBar />
            <div className="flex min-h-0 flex-1">
              <LeftSidebar />
              <Feed />
              <RightSidebar />
            </div>
          </div>
        </div>
        <Dock />
      </div>
    </div>
  );
}
